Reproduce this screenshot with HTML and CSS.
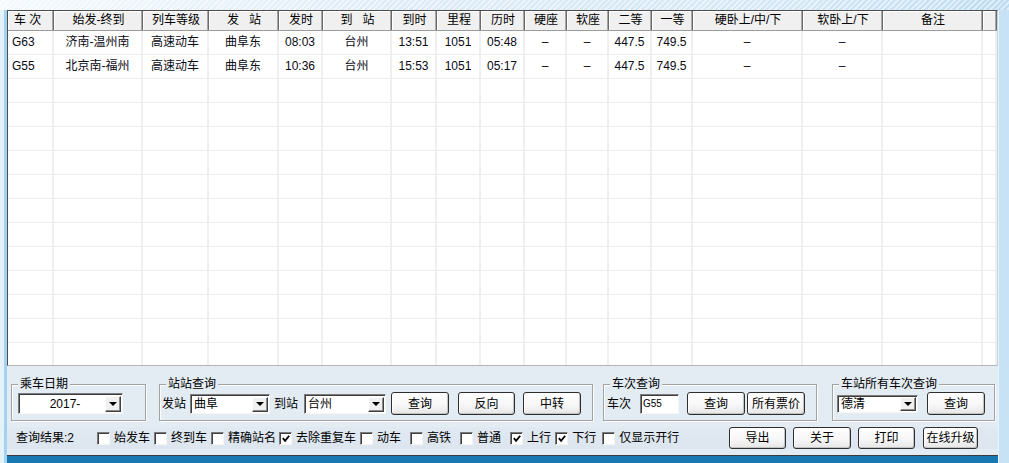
FILE: index.html
```html
<!DOCTYPE html>
<html lang="zh-CN">
<head>
<meta charset="utf-8">
<title>列车时刻查询</title>
<link rel="stylesheet" href="styles.css">
</head>
<body>
<div class="app">
  <div class="window">
    <div class="grid">
      <div class="row head">
        <div class="hc left">车 次</div>
        <div class="hc">始发-终到</div>
        <div class="hc">列车等级</div>
        <div class="hc">发&nbsp;&nbsp;&nbsp;站</div>
        <div class="hc">发时</div>
        <div class="hc">到&nbsp;&nbsp;&nbsp;站</div>
        <div class="hc">到时</div>
        <div class="hc">里程</div>
        <div class="hc">历时</div>
        <div class="hc">硬座</div>
        <div class="hc">软座</div>
        <div class="hc">二等</div>
        <div class="hc">一等</div>
        <div class="hc">硬卧上/中/下</div>
        <div class="hc">软卧上/下</div>
        <div class="hc">备注</div>
        <div class="hc"></div>
      </div>
      <div class="row">
        <div class="c left">G63</div><div class="c">济南-温州南</div><div class="c">高速动车</div><div class="c">曲阜东</div><div class="c">08:03</div><div class="c">台州</div><div class="c">13:51</div><div class="c">1051</div><div class="c">05:48</div><div class="c">–</div><div class="c">–</div><div class="c">447.5</div><div class="c">749.5</div><div class="c">–</div><div class="c">–</div><div class="c"></div><div class="c"></div>
      </div>
      <div class="row">
        <div class="c left">G55</div><div class="c">北京南-福州</div><div class="c">高速动车</div><div class="c">曲阜东</div><div class="c">10:36</div><div class="c">台州</div><div class="c">15:53</div><div class="c">1051</div><div class="c">05:17</div><div class="c">–</div><div class="c">–</div><div class="c">447.5</div><div class="c">749.5</div><div class="c">–</div><div class="c">–</div><div class="c"></div><div class="c"></div>
      </div>
      <div class="row"><div class="c"></div><div class="c"></div><div class="c"></div><div class="c"></div><div class="c"></div><div class="c"></div><div class="c"></div><div class="c"></div><div class="c"></div><div class="c"></div><div class="c"></div><div class="c"></div><div class="c"></div><div class="c"></div><div class="c"></div><div class="c"></div><div class="c"></div></div>
      <div class="row"><div class="c"></div><div class="c"></div><div class="c"></div><div class="c"></div><div class="c"></div><div class="c"></div><div class="c"></div><div class="c"></div><div class="c"></div><div class="c"></div><div class="c"></div><div class="c"></div><div class="c"></div><div class="c"></div><div class="c"></div><div class="c"></div><div class="c"></div></div>
      <div class="row"><div class="c"></div><div class="c"></div><div class="c"></div><div class="c"></div><div class="c"></div><div class="c"></div><div class="c"></div><div class="c"></div><div class="c"></div><div class="c"></div><div class="c"></div><div class="c"></div><div class="c"></div><div class="c"></div><div class="c"></div><div class="c"></div><div class="c"></div></div>
      <div class="row"><div class="c"></div><div class="c"></div><div class="c"></div><div class="c"></div><div class="c"></div><div class="c"></div><div class="c"></div><div class="c"></div><div class="c"></div><div class="c"></div><div class="c"></div><div class="c"></div><div class="c"></div><div class="c"></div><div class="c"></div><div class="c"></div><div class="c"></div></div>
      <div class="row"><div class="c"></div><div class="c"></div><div class="c"></div><div class="c"></div><div class="c"></div><div class="c"></div><div class="c"></div><div class="c"></div><div class="c"></div><div class="c"></div><div class="c"></div><div class="c"></div><div class="c"></div><div class="c"></div><div class="c"></div><div class="c"></div><div class="c"></div></div>
      <div class="row"><div class="c"></div><div class="c"></div><div class="c"></div><div class="c"></div><div class="c"></div><div class="c"></div><div class="c"></div><div class="c"></div><div class="c"></div><div class="c"></div><div class="c"></div><div class="c"></div><div class="c"></div><div class="c"></div><div class="c"></div><div class="c"></div><div class="c"></div></div>
      <div class="row"><div class="c"></div><div class="c"></div><div class="c"></div><div class="c"></div><div class="c"></div><div class="c"></div><div class="c"></div><div class="c"></div><div class="c"></div><div class="c"></div><div class="c"></div><div class="c"></div><div class="c"></div><div class="c"></div><div class="c"></div><div class="c"></div><div class="c"></div></div>
      <div class="row"><div class="c"></div><div class="c"></div><div class="c"></div><div class="c"></div><div class="c"></div><div class="c"></div><div class="c"></div><div class="c"></div><div class="c"></div><div class="c"></div><div class="c"></div><div class="c"></div><div class="c"></div><div class="c"></div><div class="c"></div><div class="c"></div><div class="c"></div></div>
      <div class="row"><div class="c"></div><div class="c"></div><div class="c"></div><div class="c"></div><div class="c"></div><div class="c"></div><div class="c"></div><div class="c"></div><div class="c"></div><div class="c"></div><div class="c"></div><div class="c"></div><div class="c"></div><div class="c"></div><div class="c"></div><div class="c"></div><div class="c"></div></div>
      <div class="row"><div class="c"></div><div class="c"></div><div class="c"></div><div class="c"></div><div class="c"></div><div class="c"></div><div class="c"></div><div class="c"></div><div class="c"></div><div class="c"></div><div class="c"></div><div class="c"></div><div class="c"></div><div class="c"></div><div class="c"></div><div class="c"></div><div class="c"></div></div>
      <div class="row"><div class="c"></div><div class="c"></div><div class="c"></div><div class="c"></div><div class="c"></div><div class="c"></div><div class="c"></div><div class="c"></div><div class="c"></div><div class="c"></div><div class="c"></div><div class="c"></div><div class="c"></div><div class="c"></div><div class="c"></div><div class="c"></div><div class="c"></div></div>
      <div class="row"><div class="c"></div><div class="c"></div><div class="c"></div><div class="c"></div><div class="c"></div><div class="c"></div><div class="c"></div><div class="c"></div><div class="c"></div><div class="c"></div><div class="c"></div><div class="c"></div><div class="c"></div><div class="c"></div><div class="c"></div><div class="c"></div><div class="c"></div></div>
      <div class="row"><div class="c"></div><div class="c"></div><div class="c"></div><div class="c"></div><div class="c"></div><div class="c"></div><div class="c"></div><div class="c"></div><div class="c"></div><div class="c"></div><div class="c"></div><div class="c"></div><div class="c"></div><div class="c"></div><div class="c"></div><div class="c"></div><div class="c"></div></div>
    </div>

    <div class="panel">
      <div class="groups">
        <div class="group g1">
          <div class="gtitle">乘车日期</div>
          <div class="gbody">
            <div class="combo date"><span class="ctext center">2017-</span><span class="cbtn"><i class="tri"></i></span></div>
          </div>
        </div>
        <div class="group g2">
          <div class="gtitle">站站查询</div>
          <div class="gbody">
            <span class="lbl">发站</span>
            <div class="combo from"><span class="ctext">曲阜</span><span class="cbtn"><i class="tri"></i></span></div>
            <span class="lbl to-lbl">到站</span>
            <div class="combo to"><span class="ctext">台州</span><span class="cbtn"><i class="tri"></i></span></div>
            <button class="btn b-q">查询</button>
            <button class="btn b-rev">反向</button>
            <button class="btn b-mid">中转</button>
          </div>
        </div>
        <div class="group g3">
          <div class="gtitle">车次查询</div>
          <div class="gbody">
            <span class="lbl">车次</span>
            <div class="input">G55</div>
            <button class="btn b-q3">查询</button>
            <button class="btn b-all">所有票价</button>
          </div>
        </div>
        <div class="group g4">
          <div class="gtitle">车站所有车次查询</div>
          <div class="gbody">
            <div class="combo station"><span class="ctext">德清</span><span class="cbtn"><i class="tri"></i></span></div>
            <button class="btn b-q4">查询</button>
          </div>
        </div>
      </div>

      <div class="status">
        <span class="result">查询结果:2</span>
        <span class="chk"><i class="box"></i>始发车</span>
        <span class="chk"><i class="box"></i>终到车</span>
        <span class="chk tight"><i class="box"></i>精确站名</span>
        <span class="chk"><i class="box on"><svg viewBox="0 0 11 11" width="11" height="11"><polyline points="2,5 4.5,8 9,2.5" fill="none" stroke="#000" stroke-width="2"/></svg></i>去除重复车</span>
        <span class="chk wide"><i class="box"></i>动车</span>
        <span class="chk wide"><i class="box"></i>高铁</span>
        <span class="chk wide"><i class="box"></i>普通</span>
        <span class="chk"><i class="box on"><svg viewBox="0 0 11 11" width="11" height="11"><polyline points="2,5 4.5,8 9,2.5" fill="none" stroke="#000" stroke-width="2"/></svg></i>上行</span>
        <span class="chk mid"><i class="box on"><svg viewBox="0 0 11 11" width="11" height="11"><polyline points="2,5 4.5,8 9,2.5" fill="none" stroke="#000" stroke-width="2"/></svg></i>下行</span>
        <span class="chk"><i class="box"></i>仅显示开行</span>
        <div class="actions">
          <button class="btn sb">导出</button>
          <button class="btn sb b2">关于</button>
          <button class="btn sb b3">打印</button>
          <button class="btn sb up">在线升级</button>
        </div>
      </div>
    </div>
    <div class="strip"></div>
  </div>
</div>
</body>
</html>
```

FILE: styles.css
```css
* { box-sizing: border-box; }

html, body { margin: 0; padding: 0; }

body {
  width: 1009px;
  height: 463px;
  overflow: hidden;
  font: 12px/14px "Liberation Sans", "Noto Sans CJK SC", sans-serif;
  color: #000;
  background:
    repeating-linear-gradient(135deg, rgba(255,255,255,0) 0 2px, rgba(255,255,255,0.5) 2px 4px) 0 0 / 100% 10px no-repeat,
    linear-gradient(90deg, #f4f9fd 0%, #dcebf7 40%, #d2e6f5 80%, #bcdcf1 100%) 0 0 / 100% 10px no-repeat,
    linear-gradient(90deg, #e6f1f9 0px, #d3e8f6 50%, #c6e2f4 100%);
}

.app {
  height: 463px;
  padding: 10px 11px 0 4px;
  display: flex;
}

.window {
  flex: 1;
  height: 453px;
  display: flex;
  flex-direction: column;
  border-left: 3px solid #a2d3f0;
  border-right: 1px solid #e8f4fb;
}

/* ---------- grid ---------- */
.grid {
  height: 356px;
  flex: none;
  background: #fff;
  border: 1px solid;
  border-color: #4d4d4d #c9d3db #b5b5b5 #4d4d4d;
  overflow: hidden;
}

.row {
  display: grid;
  grid-template-columns: 46px 89px 66px 70px 44px 69px 45px 44px 44px 42px 42px 43px 41px 110px 80px 100px 14px;
}

.hc {
  height: 20px;
  line-height: 19px;
  text-align: center;
  white-space: nowrap;
  overflow: hidden;
  background: #f0f0f0;
  border-bottom: 1px solid #9c9c9c;
  box-shadow: inset -1px 0 #6a6a6a, inset -2px 0 #a8a8a8, inset 1px 1px #ffffff;
}

.hc.left { text-align: left; padding-left: 6px; }

.c {
  height: 24px;
  line-height: 23px;
  text-align: center;
  white-space: nowrap;
  overflow: hidden;
  border-bottom: 1px solid #ebebeb;
  border-right: 2px solid #efefef;
  color: #0a0a14;
}

.c.left { text-align: left; padding-left: 4px; }

/* ---------- panel ---------- */
.panel {
  height: 89px;
  flex: none;
  background: #e3ebf3;
  padding: 18px 0 0 4px;
  display: flex;
  flex-direction: column;
}

.groups {
  display: flex;
  align-items: flex-start;
}

.group {
  height: 37px;
  border: 1px solid #a3a3a3;
  box-shadow: inset 1px 1px #fafcfe, 1px 1px #fafcfe;
  display: flex;
  flex-direction: column;
}

.gtitle {
  align-self: flex-start;
  margin: -8px 0 0 6px;
  padding: 0 2px;
  height: 14px;
  line-height: 14px;
  background: #e3ebf3;
  white-space: nowrap;
}

.gbody {
  height: 25px;
  display: flex;
  align-items: center;
}

.g1 { width: 135px; }
.g1 .gbody { padding-left: 6px; }
.g2 { width: 434px; margin-left: 13px; }
.g2 .gbody { padding-left: 2px; }
.g3 { width: 214px; margin-left: 10px; }
.g3 .gbody { padding-left: 3px; }
.g4 { width: 163px; margin-left: 15px; }
.g4 .gbody { padding-left: 4px; }

.lbl { width: 24px; white-space: nowrap; }

.combo {
  display: flex;
  align-items: stretch;
  background: #fff;
  border: 1px solid;
  border-color: #7c7c7c #f6f6f6 #f6f6f6 #7c7c7c;
  box-shadow: inset 1px 1px #3d3d3d;
  padding: 2px 1px 1px 2px;
}

.ctext {
  flex: 1;
  line-height: 15px;
  padding-left: 1px;
  white-space: nowrap;
}

.ctext.center { text-align: center; padding-left: 4px; }

.cbtn {
  width: 16px;
  flex: none;
  background: #f0f0f0;
  border: 1px solid;
  border-color: #ffffff #404040 #404040 #ffffff;
  box-shadow: inset -1px -1px #8a8a8a;
  display: flex;
  align-items: center;
  justify-content: center;
}

.tri {
  width: 0;
  height: 0;
  border-left: 4px solid transparent;
  border-right: 4px solid transparent;
  border-top: 4px solid #000;
}

.date { width: 105px; height: 21px; }
.date .ctext { line-height: 16px; }
.from { width: 80px; height: 20px; margin-left: 4px; }
.to-lbl { margin-left: 4px; }
.to { width: 82px; height: 20px; margin-left: 6px; }
.station { width: 81px; height: 18px; padding-top: 1px; }
.station .ctext { line-height: 14px; }

.input {
  width: 39px;
  height: 20px;
  margin-left: 9px;
  background: #fff;
  border: 1px solid;
  border-color: #7c7c7c #f6f6f6 #f6f6f6 #7c7c7c;
  box-shadow: inset 1px 1px #3d3d3d;
  font: 10px/12px "Liberation Sans", sans-serif;
  padding: 3px 0 0 2px;
}

.btn {
  height: 23px;
  padding: 0;
  margin: 0;
  font: 12px/14px "Liberation Sans", "Noto Sans CJK SC", sans-serif;
  color: #000;
  background: linear-gradient(#ffffff, #f7f7f7 55%, #e6e6e6);
  border: 1px solid #2e2e2e;
  border-radius: 3px;
  box-shadow: inset -1px -1px #c2c2c2, inset 1px 1px #ffffff;
  display: flex;
  align-items: center;
  justify-content: center;
  white-space: nowrap;
}

.b-q { width: 58px; margin-left: 5px; }
.b-rev { width: 57px; margin-left: 9px; }
.b-mid { width: 58px; margin-left: 8px; }
.b-q3 { width: 58px; margin-left: 8px; }
.b-all { width: 58px; margin-left: 2px; }
.b-q4 { width: 58px; margin-left: 9px; }

/* ---------- status row ---------- */
.status {
  height: 22px;
  margin: 6px 0 0 -4px;
  padding-left: 9px;
  display: flex;
  align-items: center;
  background: linear-gradient(#e0e8f1, #dde6ef);
}

.result { width: 81px; white-space: nowrap; }

.chk {
  display: flex;
  align-items: center;
  white-space: nowrap;
  margin-right: 4px;
}

.chk.tight { margin-right: 3px; }
.chk.wide { margin-right: 9px; }
.chk.mid { margin-right: 6px; }

.box {
  width: 13px;
  height: 13px;
  margin-right: 4px;
  background: #fff;
  border: 1px solid;
  border-color: #7a7a7a #f4f4f4 #f4f4f4 #7a7a7a;
  box-shadow: inset 1px 1px #404040;
  display: flex;
  align-items: center;
  justify-content: center;
  padding: 1px 0 0 1px;
}

.actions {
  margin-left: auto;
  margin-right: 20px;
  display: flex;
}

.sb { width: 57px; height: 22px; }
.sb.b2 { width: 58px; margin-left: 7px; }
.sb.b3 { margin-left: 7px; }
.sb.up { width: 55px; margin-left: 8px; }

.strip {
  height: 8px;
  flex: none;
  border-top: 1px solid #3a3a3a;
  background: #1878b2;
}
```
